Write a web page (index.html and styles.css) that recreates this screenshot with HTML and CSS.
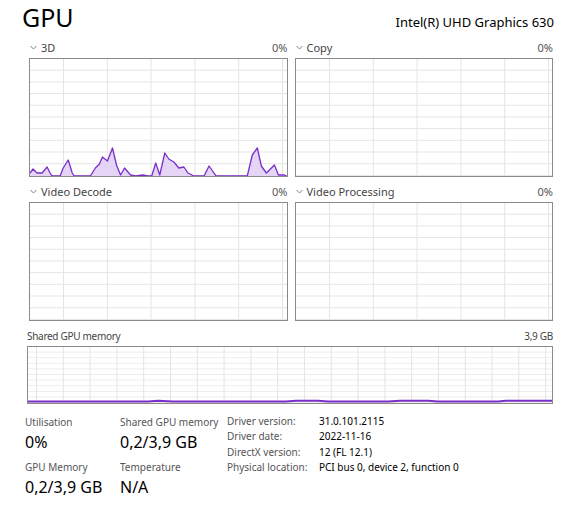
FILE: index.html
```html
<!DOCTYPE html>
<html lang="en">
<head>
    <meta charset="UTF-8">
    <title>GPU</title>
    <link rel="stylesheet" href="styles.css">
</head>
<body>
    <div class="page">
        <!-- Title row -->
        <div class="head">
            <h1>GPU</h1>
            <div class="model">Intel(R) UHD Graphics 630</div>
        </div>

        <!-- Engine graphs -->
        <div class="engines">
            <div class="engine">
                <div class="engine-head">
                    <svg class="chev" width="7" height="5" viewBox="0 0 7 5"><polyline points="0.5,1 3.5,4 6.5,1"/></svg>
                    <span class="name">3D</span>
                    <span class="pct">0%</span>
                </div>
                <div class="chart">
                    <svg class="plot" viewBox="0 0 255 117" preserveAspectRatio="none">
                        <polygon class="area" points="0,114 3,110 7,114 12,114 17,108 20,114 22,117 30,117 33,109 38,101 42,114 44,117 60,117 65,109 69,105 72,98 77,102 82,89 86,106 90,116 94,109 100,116 105,117 112,116 117,117 121,117 125,104 129,116 134,94 138,100 143,103 148,109 153,108 157,114 163,117 173,117 178,107 185,117 216,117 221,96 226,89 230,107 235,114 243,106 247,116 253,116 255,117 0,117"/>
                        <polyline class="line" points="0,114 3,110 7,114 12,114 17,108 20,114 22,117 30,117 33,109 38,101 42,114 44,117 60,117 65,109 69,105 72,98 77,102 82,89 86,106 90,116 94,109 100,116 105,117 112,116 117,117 121,117 125,104 129,116 134,94 138,100 143,103 148,109 153,108 157,114 163,117 173,117 178,107 185,117 216,117 221,96 226,89 230,107 235,114 243,106 247,116 253,116 255,117"/>
                    </svg>
                </div>
            </div>
            <div class="engine">
                <div class="engine-head">
                    <svg class="chev" width="7" height="5" viewBox="0 0 7 5"><polyline points="0.5,1 3.5,4 6.5,1"/></svg>
                    <span class="name">Copy</span>
                    <span class="pct">0%</span>
                </div>
                <div class="chart"></div>
            </div>
            <div class="engine">
                <div class="engine-head">
                    <svg class="chev" width="7" height="5" viewBox="0 0 7 5"><polyline points="0.5,1 3.5,4 6.5,1"/></svg>
                    <span class="name">Video Decode</span>
                    <span class="pct">0%</span>
                </div>
                <div class="chart"></div>
            </div>
            <div class="engine">
                <div class="engine-head">
                    <svg class="chev" width="7" height="5" viewBox="0 0 7 5"><polyline points="0.5,1 3.5,4 6.5,1"/></svg>
                    <span class="name">Video Processing</span>
                    <span class="pct">0%</span>
                </div>
                <div class="chart"></div>
            </div>
        </div>

        <!-- Shared memory graph -->
        <div class="mem">
            <div class="mem-head">
                <span>Shared GPU memory</span>
                <span>3,9 GB</span>
            </div>
            <div class="chart mem-chart">
                <svg class="plot" viewBox="0 0 524 56" preserveAspectRatio="none">
                    <polyline class="line thick" points="0,54.5 120,54.5 130,53.8 145,54.5 258,54.5 268,53.8 290,53.8 300,54.5 360,54.5 372,53.8 400,53.8 410,54.5 470,54.5 478,53.8 524,53.8"/>
                </svg>
            </div>
        </div>

        <!-- Stats -->
        <div class="stats">
            <div class="stat-col">
                <div class="stat">
                    <div class="stat-label">Utilisation</div>
                    <div class="stat-value">0%</div>
                </div>
                <div class="stat">
                    <div class="stat-label">GPU Memory</div>
                    <div class="stat-value">0,2/3,9 GB</div>
                </div>
            </div>
            <div class="stat-col">
                <div class="stat">
                    <div class="stat-label">Shared GPU memory</div>
                    <div class="stat-value">0,2/3,9 GB</div>
                </div>
                <div class="stat">
                    <div class="stat-label">Temperature</div>
                    <div class="stat-value">N/A</div>
                </div>
            </div>
            <table class="info">
                <tr><td class="key">Driver version:</td><td>31.0.101.2115</td></tr>
                <tr><td class="key">Driver date:</td><td>2022-11-16</td></tr>
                <tr><td class="key">DirectX version:</td><td>12 (FL 12.1)</td></tr>
                <tr><td class="key">Physical location:</td><td>PCI bus 0, device 2, function 0</td></tr>
            </table>
        </div>
    </div>
</body>
</html>
```

FILE: styles.css
```css
body {
    margin: 0;
    background-color: #ffffff;
    color: #000;
    font-family: "Noto Sans", "Open Sans", sans-serif;
}

.page {
    width: 575px;
    height: 507px;
    padding: 0 22px 0 27px;
    box-sizing: border-box;
}

.head {
    display: flex;
    justify-content: space-between;
    align-items: baseline;
    margin-left: -5px;
    height: 34px;
    margin-bottom: 5px;
}

h1 {
    margin: 0;
    font-size: 25px;
    font-weight: normal;
    line-height: 34px;
}

.model {
    font-size: 13px;
    margin-right: -1px;
}

/* Engine graphs */
.engines {
    display: grid;
    grid-template-columns: 1fr 1fr;
    column-gap: 7px;
    row-gap: 6px;
    margin-left: 2px;
}

.engine-head {
    display: flex;
    align-items: center;
    height: 16px;
    margin-bottom: 3px;
    font-size: 11px;
    color: #444;
}

.chev {
    margin: 0 4px 0 1px;
    fill: none;
    stroke: #808080;
    stroke-width: 1;
}

.name {
    flex: 1;
}

.pct {
    color: #555;
}

.chart {
    height: 119px;
    box-sizing: border-box;
    border: 1px solid #8a8a8a;
    background-color: #fff;
    background-image:
        linear-gradient(to right, #e4e4e4 1px, transparent 1px),
        linear-gradient(to bottom, transparent 10.7px, #e4e4e4 10.7px);
    background-size: 43.8px 100%, 100% 11.7px;
    background-position: 33px 0, 0 0;
}

.plot {
    display: block;
    width: 100%;
    height: 100%;
}

.area {
    fill: #e4d5f7;
}

.line {
    fill: none;
    stroke: #7a2fc8;
    stroke-width: 1.3;
    stroke-linejoin: round;
}

.line.thick {
    stroke-width: 2;
}

/* Shared memory graph */
.mem {
    margin-top: 8px;
}

.mem-head {
    display: flex;
    justify-content: space-between;
    height: 15px;
    line-height: 15px;
    margin-bottom: 2px;
    font-size: 10px;
    letter-spacing: -0.3px;
    color: #444;
}

.mem-chart {
    height: 58px;
    background-size: 26.8px 100%, 100% 5.6px;
    background-position: 8px 0, 0 0;
    background-image:
        linear-gradient(to right, #e4e4e4 1px, transparent 1px),
        linear-gradient(to bottom, transparent 4.6px, #ececec 4.6px);
}

/* Stats */
.stats {
    display: flex;
    align-items: flex-start;
    margin-left: -2px;
    margin-top: 10px;
}

.stat-col {
    width: 95px;
    white-space: nowrap;
}

.stat-col + .stat-col {
    width: 107px;
}

.stat + .stat {
    margin-top: 5px;
}

.stat-label {
    font-size: 10px;
    line-height: 16px;
    color: #555;
}

.stat-value {
    font-size: 16px;
    line-height: 24px;
}

.info {
    border-collapse: collapse;
    font-size: 10px;
}

.info td {
    padding: 0;
    height: 15.3px;
    line-height: 15.3px;
    white-space: nowrap;
}

.info .key {
    width: 92px;
    color: #555;
}
```
